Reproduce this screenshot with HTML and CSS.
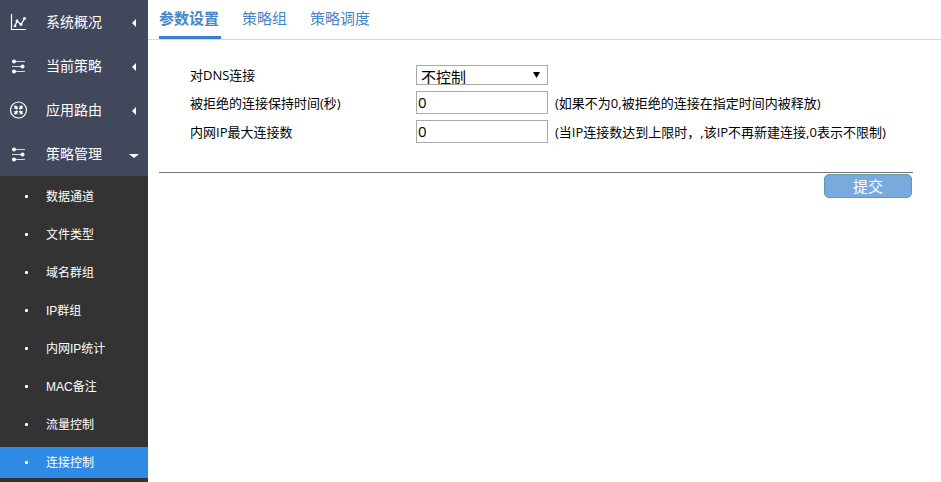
FILE: index.html
```html
<!DOCTYPE html>
<html lang="zh-CN">
<head>
    <meta charset="UTF-8">
    <title>连接控制</title>
    <link rel="stylesheet" href="styles.css">
</head>
<body>
<div class="sidebar">
    <ul class="menu">
        <li><a href="#">
            <svg class="icon" viewBox="0 0 18 18"><path d="M1.5 1v15.500H16" fill="none" stroke="#fff" stroke-width="1.200"/><path d="M5 13l2-5 4 3.500 3.500-6" fill="none" stroke="#fff" stroke-width="1.300"/><g fill="#fff"><circle cx="5" cy="13" r="1.300"/><circle cx="7" cy="8" r="1.400"/><circle cx="11" cy="11.500" r="1.400"/><circle cx="14.500" cy="5.500" r="1.500"/></g></svg>
            <span>系统概况</span><i class="arrow"></i></a></li>
        <li><a href="#">
            <svg class="icon" viewBox="0 0 18 18"><path d="M2 4.500h13M2 9.500h11M2 14.500h13" stroke="#d5d8e2" stroke-width="1"/><g fill="#fff"><circle cx="4" cy="4.500" r="2"/><circle cx="12.500" cy="9.500" r="2"/><circle cx="4" cy="14.500" r="2"/></g></svg>
            <span>当前策略</span><i class="arrow"></i></a></li>
        <li><a href="#">
            <svg class="icon" viewBox="0 0 18 18"><circle cx="8.500" cy="9" r="8" fill="none" stroke="#fff" stroke-width="1.200"/><path d="M4.500 5l3 3M12.500 5l-3 3M4.500 13l3-3M12.500 13l-3-3" stroke="#fff" stroke-width="1.800"/><path d="M3.700 7.800h3.600V4.200zM13.300 7.800H9.700V4.200zM3.700 10.200h3.600v3.600zM13.300 10.200H9.700v3.600z" fill="#fff"/></svg>
            <span>应用路由</span><i class="arrow"></i></a></li>
        <li><a href="#">
            <svg class="icon" viewBox="0 0 18 18"><path d="M2 4.500h13M2 9.500h11M2 14.500h13" stroke="#d5d8e2" stroke-width="1"/><g fill="#fff"><circle cx="4" cy="4.500" r="2"/><circle cx="12.500" cy="9.500" r="2"/><circle cx="4" cy="14.500" r="2"/></g></svg>
            <span>策略管理</span><i class="arrow down"></i></a></li>
    </ul>
    <ul class="submenu">
        <li><a href="#">数据通道</a></li>
        <li><a href="#">文件类型</a></li>
        <li><a href="#">域名群组</a></li>
        <li><a href="#">IP群组</a></li>
        <li><a href="#">内网IP统计</a></li>
        <li><a href="#">MAC备注</a></li>
        <li><a href="#">流量控制</a></li>
        <li><a href="#" class="active">连接控制</a></li>
    </ul>
</div>
<div class="main">
    <div class="tabs">
        <a href="#" class="current">参数设置</a>
        <a href="#">策略组</a>
        <a href="#">策略调度</a>
    </div>
    <form class="params">
        <div class="fields">
            <label for="dns">对DNS连接</label>
            <div class="select-box">
                <select id="dns">
                    <option>不控制</option>
                </select>
                <svg viewBox="0 0 7 6"><path d="M0 0h7L3.500 6z"/></svg>
            </div>
            <span></span>
            <label for="keep">被拒绝的连接保持时间(秒)</label>
            <input type="text" id="keep" value="0">
            <span>(如果不为0,被拒绝的连接在指定时间内被释放)</span>
            <label for="max">内网IP最大连接数</label>
            <input type="text" id="max" value="0">
            <span>(当IP连接数达到上限时，,该IP不再新建连接,0表示不限制)</span>
        </div>
        <div class="buttons">
            <button type="button">提交</button>
        </div>
    </form>
</div>
</body>
</html>
```
FILE: styles.css
```css
* {
    box-sizing: border-box;
}
body {
    margin: 0;
    min-height: 100vh;
    display: flex;
    background: #fff;
    color: #000;
    font: 13px/20px "Open Sans", "Noto Sans CJK SC", sans-serif;
}
a {
    text-decoration: none;
}
ul {
    list-style: none;
    margin: 0;
    padding: 0;
}

/* left menu */
.sidebar {
    flex: 0 0 148px;
    background: #333;
    font-family: "Liberation Sans", "Noto Sans CJK SC", sans-serif;
}
.menu {
    background: #42485c;
}
.menu a {
    display: flex;
    align-items: center;
    height: 44px;
    padding: 0 9px 0 10px;
    color: #fff;
    font-size: 14px;
}
.icon {
    width: 18px;
    height: 18px;
    margin-right: 18px;
}
.arrow {
    margin: 2px 3px 0 auto;
    border: 4px solid transparent;
    border-left: 0;
    border-right-color: #fff;
}
.arrow.down {
    margin: 3px 0 0 auto;
    border: 5px solid transparent;
    border-bottom: 0;
    border-top: 4px solid #fff;
}
.submenu {
    padding-top: 5px;
}
.submenu li {
    margin-bottom: 7px;
}
.submenu li:last-child {
    margin-bottom: 4px;
}
.submenu a {
    display: flex;
    align-items: center;
    height: 31px;
    padding-left: 25px;
    color: #fff;
    font-size: 12px;
}
.submenu a:before {
    content: "";
    width: 3px;
    height: 3px;
    margin-right: 18px;
    border-radius: 1px;
    background: #fff;
}
.submenu a.active {
    background: #2e8ae5;
}

/* right side */
.main {
    flex: 1;
}
.tabs {
    display: flex;
    gap: 21px;
    height: 40px;
    padding-left: 11px;
    border-bottom: 1px solid #d8d8d8;
}
.tabs a {
    height: 39px;
    padding-right: 2px;
    color: #4686c6;
    font-size: 15px;
    line-height: 37px;
}
.tabs .current {
    border-bottom: 3px solid #3a80cd;
    font-weight: bold;
}
.params {
    margin: 25px 28px 0 11px;
}
.fields {
    display: grid;
    grid-template-columns: 226px 132px 1fr;
    row-gap: 6px;
    align-items: center;
    padding: 0 0 29px 31px;
    border-bottom: 1px solid #777;
}
.fields span {
    padding-left: 7px;
}
.select-box {
    position: relative;
    height: 20px;
}
.select-box svg {
    position: absolute;
    top: 7px;
    right: 8px;
    width: 7px;
    height: 6px;
}
select, input {
    display: block;
    width: 100%;
    margin: 0;
    border: 1px solid #a9a9a9;
    border-radius: 0;
    background: #fff;
    color: #000;
    font-family: inherit;
    font-size: 15px;
}
select {
    appearance: none;
    height: 20px;
    padding: 3px 4px 0;
    line-height: 16px;
}
input {
    height: 23px;
    padding: 0 1px 2px;
}
.buttons {
    padding: 1px 1px 0 0;
    text-align: right;
}
button {
    width: 88px;
    height: 24px;
    padding: 0;
    border: 1px solid #5f9ea0;
    border-radius: 5px;
    background: #78aadf;
    color: #fff;
    font-family: inherit;
    font-size: 15px;
    line-height: 20px;
}
```
